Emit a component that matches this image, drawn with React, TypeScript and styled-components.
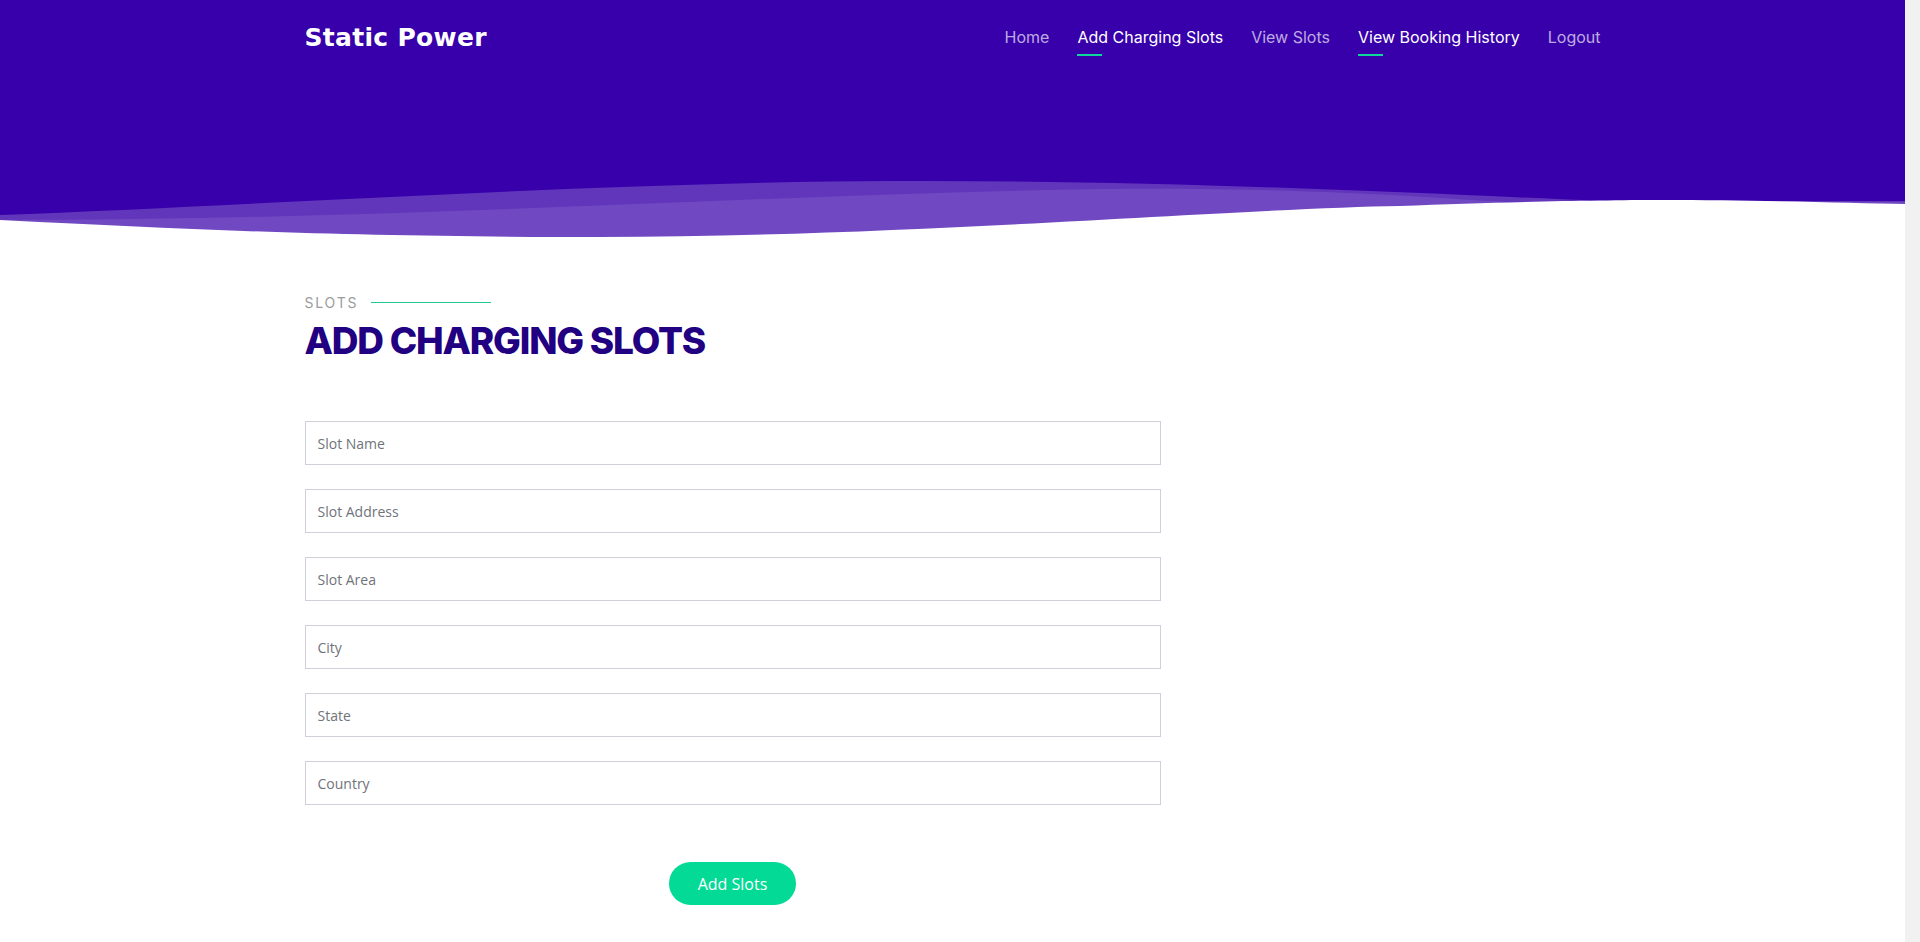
import React from "react";
import styled, { createGlobalStyle } from "styled-components";

const GlobalStyle = createGlobalStyle`
  html {
    background: #f1f1f1;
  }
  body {
    margin: 0 15px 0 0;
    background: #ffffff;
    font-family: "Open Sans", "Liberation Sans", sans-serif;
  }
  *, *::before, *::after { box-sizing: border-box; }
`;

const Header = styled.header`
  background: #3800aa;
  display: flex;
  flex-direction: column;
  height: 240px;
`;

const Container = styled.div`
  width: 100%;
  max-width: 1320px;
  margin: 0 auto;
  padding: 0 12px;
`;

const NavBar = styled.nav`
  display: flex;
  align-items: center;
  justify-content: space-between;
  height: 74px;
`;

const Brand = styled.a`
  font-family: "DejaVu Sans", "Inter", sans-serif;
  font-weight: 700;
  font-size: 25px;
  letter-spacing: 0.3px;
  color: #ffffff;
  text-decoration: none;
`;

const NavList = styled.ul`
  display: flex;
  align-items: center;
  gap: 28px;
  list-style: none;
  margin: 0;
  padding: 0;
`;

const NavLink = styled.a<{ $active?: boolean }>`
  display: flex;
  flex-direction: column;
  align-items: flex-start;
  gap: 7px;
  padding-top: 9px;
  font-family: "Inter", "Open Sans", sans-serif;
  font-size: 16px;
  font-weight: 400;
  color: ${(p) => (p.$active ? "#ffffff" : "rgba(255,255,255,0.68)")};
  text-decoration: none;
  &::after {
    content: "";
    width: 25px;
    height: 2px;
    background: ${(p) => (p.$active ? "#0fd79b" : "transparent")};
  }
`;

const Spacer = styled.div`
  flex: 1;
`;

const Wave = styled.svg`
  display: block;
  width: 100%;
  height: 70px;
`;

const Section = styled.section`
  padding: 54px 0 142px;
`;

const Label = styled.div`
  display: flex;
  align-items: center;
  gap: 13px;
  font-family: "Inter", "Open Sans", sans-serif;
  font-size: 14px;
  letter-spacing: 1.8px;
  color: #9b9b9b;
  text-transform: uppercase;
  &::after {
    content: "";
    width: 120px;
    height: 1px;
    background: #22c98f;
  }
`;

const Title = styled.h2`
  margin: 6px 0 0;
  font-family: "Inter", "Open Sans", sans-serif;
  font-weight: 800;
  font-size: 37px;
  line-height: 48px;
  letter-spacing: -1.2px;
  color: #210082;
  text-transform: uppercase;
`;

const Form = styled.form`
  max-width: 856px;
  margin-top: 56px;
  display: flex;
  flex-direction: column;
  gap: 24px;
`;

const Input = styled.input`
  display: block;
  width: 100%;
  height: 44px;
  padding: 0 12px;
  border: 1px solid #d0d0dd;
  border-radius: 0;
  background: #ffffff;
  font-family: "Open Sans", "Liberation Sans", sans-serif;
  font-size: 14px;
  color: #333;
  outline: none;
  &::placeholder {
    color: #6f737a;
  }
`;

const ButtonRow = styled.div`
  display: flex;
  justify-content: center;
  margin-top: 33px;
`;

const SubmitButton = styled.button`
  height: 43px;
  padding: 0 29px;
  border: none;
  border-radius: 22px;
  background: #03da95;
  color: #ffffff;
  font-family: "Open Sans", "Liberation Sans", sans-serif;
  font-size: 16px;
  cursor: pointer;
`;

const navItems = [
  { label: "Home", active: false },
  { label: "Add Charging Slots", active: true },
  { label: "View Slots", active: false },
  { label: "View Booking History", active: true },
  { label: "Logout", active: false },
];

const fields = ["Slot Name", "Slot Address", "Slot Area", "City", "State", "Country"];

export default function App() {
  return (
    <>
      <GlobalStyle />
      <Header>
        <Container>
          <NavBar>
            <Brand href="#">Static Power</Brand>
            <NavList>
              {navItems.map((item) => (
                <li key={item.label}>
                  <NavLink href="#" $active={item.active}>
                    {item.label}
                  </NavLink>
                </li>
              ))}
            </NavList>
          </NavBar>
        </Container>
        <Spacer />
        <Wave viewBox="0 0 1905 70" preserveAspectRatio="none">
          <path
            d="M0 45 C250 36 600 12 894 11 C1150 10 1400 22 1600 31 L1905 31 L1905 70 L0 70 Z"
            fill="#6236bb"
          />
          <path
            d="M0 50 C400 50 750 25 1102 19 C1300 17 1420 27 1506 32 L1905 32 L1905 70 L0 70 Z"
            fill="#7049c2"
          />
          <path
            d="M0 50 C200 60 350 67 600 67 C900 67 1250 38 1400 36 C1500 32 1600 30 1660 30 C1760 30 1850 33 1905 34 L1905 70 L0 70 Z"
            fill="#ffffff"
          />
        </Wave>
      </Header>
      <Section>
        <Container>
          <Label>Slots</Label>
          <Title>Add Charging Slots</Title>
          <Form onSubmit={(e) => e.preventDefault()}>
            {fields.map((f) => (
              <Input key={f} type="text" placeholder={f} />
            ))}
            <ButtonRow>
              <SubmitButton type="submit">Add Slots</SubmitButton>
            </ButtonRow>
          </Form>
        </Container>
      </Section>
    </>
  );
}
